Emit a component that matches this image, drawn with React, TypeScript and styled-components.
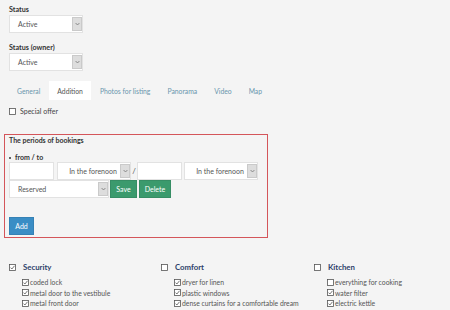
import React from 'react';
import styled, { createGlobalStyle } from 'styled-components';

const GlobalStyle = createGlobalStyle`
  html, body {
    margin: 0;
    padding: 0;
    background: #f4f4f4;
  }
  body {
    font-family: Lato, 'Open Sans', sans-serif;
    color: #444;
    font-size: 7px;
  }
`;

const Page = styled.div`
  width: 450px;
  height: 310px;
  overflow: hidden;
  padding: 5px 0 0 9px;
  box-sizing: border-box;
`;

const Label = styled.div<{ $top?: number }>`
  font-weight: bold;
  font-size: 7.2px;
  line-height: 9px;
  color: #333;
  margin-top: ${(p) => p.$top || 0}px;
  margin-bottom: 1px;
`;

const SelectBox = styled.div<{ $w: number }>`
  display: flex;
  align-items: center;
  box-sizing: border-box;
  width: ${(p) => p.$w}px;
  height: 18px;
  background: #fff;
  border: 1px solid #e2e2e2;
  color: #555;
  font-size: 7px;
`;

const SelectText = styled.span<{ $center?: boolean }>`
  flex: 1;
  padding-left: 8px;
  text-align: ${(p) => (p.$center ? 'center' : 'left')};
  white-space: nowrap;
`;

const Arrow = styled.span`
  width: 8px;
  align-self: stretch;
  margin: 1px 0;
  background: #ddd;
  border: 1px solid #cacaca;
  display: flex;
  align-items: center;
  justify-content: center;
`;

const Tabs = styled.div`
  display: flex;
  margin-top: 10px;
  height: 19px;
`;

const Tab = styled.div<{ $active?: boolean }>`
  padding: 0 8px;
  margin-right: 1px;
  display: flex;
  align-items: center;
  font-size: 6.8px;
  color: ${(p) => (p.$active ? '#555' : '#6a96ad')};
  background: ${(p) => (p.$active ? '#fff' : 'transparent')};
`;

const CheckRow = styled.label`
  display: flex;
  align-items: center;
  gap: 4px;
  height: 10px;
  margin-top: 6px;
  font-size: 7px;
  color: #444;
`;

const BookingBox = styled.div`
  margin: 18px 0 0 -5px;
  width: 264px;
  height: 104px;
  box-sizing: border-box;
  border: 1.5px solid #d4555a;
  padding: 1px 0 0 4px;
`;

const BoxTitle = styled.div`
  font-weight: bold;
  font-size: 7px;
  line-height: 9px;
  color: #333;
`;

const FromTo = styled.div`
  font-weight: bold;
  font-size: 7px;
  line-height: 9px;
  color: #333;
  margin-top: 8px;
  display: flex;
  align-items: center;
  gap: 4px;
  &::before {
    content: '';
    width: 2px;
    height: 2px;
    border-radius: 50%;
    background: #333;
  }
`;

const FieldRow = styled.div`
  display: flex;
  align-items: center;
`;

const TextInput = styled.div`
  width: 45px;
  height: 18px;
  box-sizing: border-box;
  background: #fff;
  border: 1px solid #e2e2e2;
`;

const Spacer = styled.span<{ $w: number }>`
  width: ${(p) => p.$w}px;
`;

const Slash = styled.span`
  width: 6px;
  text-align: center;
  color: #555;
  font-size: 8px;
`;

const Button = styled.div<{ $color: string; $w: number; $gap?: number }>`
  width: ${(p) => p.$w}px;
  height: 18px;
  box-sizing: border-box;
  background: ${(p) => p.$color};
  border: 1px solid rgba(0, 0, 0, 0.08);
  color: #fff;
  font-size: 7px;
  display: flex;
  align-items: center;
  justify-content: center;
  margin-left: ${(p) => p.$gap ?? 1}px;
`;

const AddButton = styled(Button)`
  margin: 19px 0 0 0;
`;

const Amenities = styled.div`
  display: grid;
  grid-template-columns: 152px 153px 130px;
  margin-top: 24px;
`;

const Group = styled.div``;

const GroupHead = styled.div`
  display: flex;
  align-items: center;
  gap: 7px;
  font-weight: bold;
  font-size: 7.8px;
  color: #2d3f6a;
  height: 10px;
`;

const Items = styled.div`
  padding-left: 13px;
  margin-top: 5px;
`;

const Item = styled.div`
  display: flex;
  align-items: center;
  gap: 1px;
  height: 10.5px;
  font-size: 6.8px;
  color: #555;
`;

const Chevron = () => (
  <svg width="5" height="4" viewBox="0 0 5 4">
    <path d="M0.6 1 L2.5 3 L4.4 1" fill="none" stroke="#777" strokeWidth="0.8" />
  </svg>
);

const Box = ({ checked }: { checked?: boolean }) => (
  <svg width="7" height="7" viewBox="0 0 7 7">
    <rect x="0.5" y="0.5" width="6" height="6" fill="#fff" stroke="#555" strokeWidth="0.8" />
    {checked && <path d="M1.5 3.6 L2.9 5 L5.5 1.8" fill="none" stroke="#555" strokeWidth="0.8" />}
  </svg>
);

const Select = ({ w, text, center }: { w: number; text: string; center?: boolean }) => (
  <SelectBox $w={w}>
    <SelectText $center={center}>{text}</SelectText>
    <Arrow>
      <Chevron />
    </Arrow>
  </SelectBox>
);

const groups = [
  {
    title: 'Security',
    checked: true,
    items: [
      ['coded lock', true],
      ['metal door to the vestibule', true],
      ['metal front door', true],
    ],
  },
  {
    title: 'Comfort',
    checked: false,
    items: [
      ['dryer for linen', true],
      ['plastic windows', true],
      ['dense curtains for a comfortable dream', true],
    ],
  },
  {
    title: 'Kitchen',
    checked: false,
    items: [
      ['everything for cooking', false],
      ['water filter', true],
      ['electric kettle', true],
    ],
  },
] as const;

const App = () => {
  return (
    <Page>
      <GlobalStyle />
      <Label>Status</Label>
      <Select w={74} text="Active" />
      <Label $top={10}>Status (owner)</Label>
      <Select w={74} text="Active" />

      <Tabs>
        <Tab>General</Tab>
        <Tab $active>Addition</Tab>
        <Tab>Photos for listing</Tab>
        <Tab>Panorama</Tab>
        <Tab>Video</Tab>
        <Tab>Map</Tab>
      </Tabs>

      <CheckRow>
        <Box />
        Special offer
      </CheckRow>

      <BookingBox>
        <BoxTitle>The periods of bookings</BoxTitle>
        <FromTo>from / to</FromTo>
        <FieldRow>
          <TextInput />
          <Spacer $w={3} />
          <Select w={74} text="In the forenoon" center />
          <Slash>/</Slash>
          <TextInput />
          <Spacer $w={2} />
          <Select w={74} text="In the forenoon" center />
        </FieldRow>
        <FieldRow>
          <Select w={100} text="Reserved" />
          <Button $color="#3b9a6d" $w={27}>Save</Button>
          <Button $color="#3b9a6d" $w={32} $gap={2}>Delete</Button>
        </FieldRow>
        <AddButton $color="#3a8dc5" $w={25}>Add</AddButton>
      </BookingBox>

      <Amenities>
        {groups.map((g) => (
          <Group key={g.title}>
            <GroupHead>
              <Box checked={g.checked} />
              {g.title}
            </GroupHead>
            <Items>
              {g.items.map(([label, on]) => (
                <Item key={label}>
                  <Box checked={on} />
                  {label}
                </Item>
              ))}
            </Items>
          </Group>
        ))}
      </Amenities>
    </Page>
  );
};

export default App;
